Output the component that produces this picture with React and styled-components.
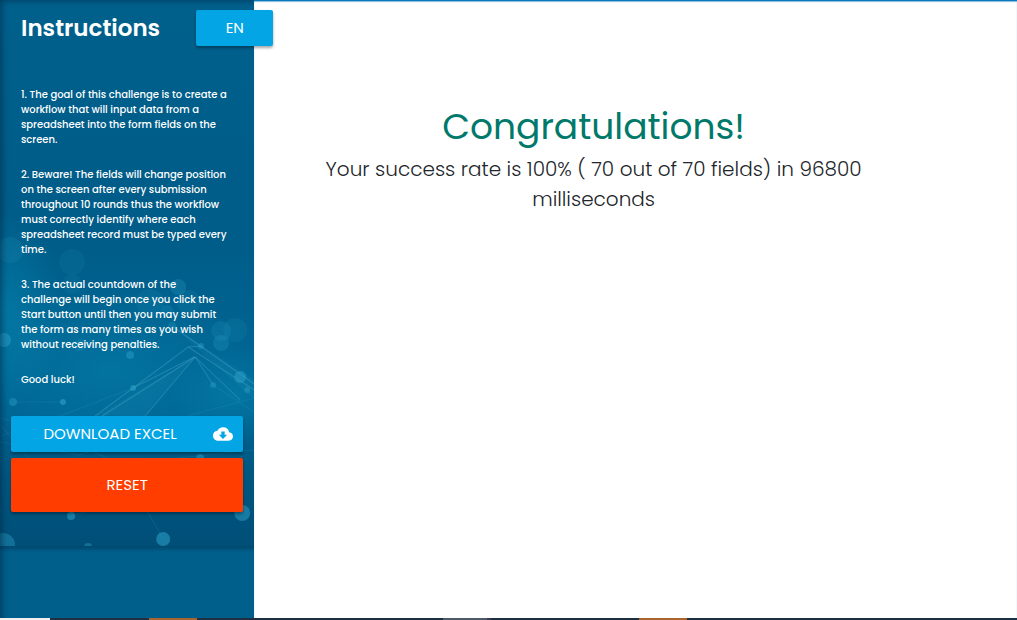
import React from "react";
import styled, { createGlobalStyle } from "styled-components";
import { MdCloudDownload } from "react-icons/md";

const GlobalStyle = createGlobalStyle`
  *, *::before, *::after { box-sizing: border-box; }
  body {
    margin: 0;
    background: #ffffff;
    color: #212529;
    font-family: Poppins, Inter, "Open Sans", sans-serif;
  }
`;

const Page = styled.div`
  display: flex;
  flex-direction: column;
  min-height: 100vh;
`;

const Columns = styled.div`
  display: flex;
  flex: 1;
`;

const Sidebar = styled.aside`
  position: relative;
  z-index: 1;
  display: flex;
  flex-direction: column;
  flex: 0 0 25%;
  min-width: 0;
  padding: 10px 11px 34px;
  background: #005f8b;
  color: #ffffff;

  &::after {
    content: "";
    position: absolute;
    inset: 0;
    z-index: -1;
    box-shadow: inset 5px 4px 6px -3px rgba(0, 40, 70, 0.6);
    pointer-events: none;
  }
`;

const Backdrop = styled.svg`
  position: absolute;
  top: 0;
  left: 0;
  z-index: -1;
  width: 100%;
  height: 556px;
`;

const Header = styled.header`
  display: flex;
  align-items: center;
  justify-content: space-between;
  height: 36px;
  margin-right: -30px;
  padding-left: 10px;
`;

const Title = styled.h1`
  margin: 0;
  font-size: 23px;
  font-weight: 600;
  line-height: 36px;
`;

const Button = styled.button`
  display: flex;
  align-items: center;
  justify-content: center;
  gap: 4px;
  width: ${(p) => p.$width || "100%"};
  height: ${(p) => (p.$tall ? "54px" : "36px")};
  padding: ${(p) => (p.$withIcon ? "0 10px 1px 0" : "0 10px 1px")};
  border: 0;
  border-radius: 2px;
  background: ${(p) => (p.$danger ? "#ff3d00" : "#03a5e4")};
  box-shadow: 0 2px 3px rgba(0, 0, 0, 0.35);
  color: #ffffff;
  font-family: inherit;
  font-size: 15px;
  font-weight: 400;
  line-height: 22px;
  text-transform: uppercase;
  cursor: pointer;
`;

const ButtonLabel = styled.span`
  flex: 1;
  text-align: center;
`;

const Rules = styled.div`
  display: flex;
  flex-direction: column;
  gap: 20px;
  margin: 41px 0 29px;
  padding-left: 10px;
  font-size: 10px;
  font-weight: 500;
  line-height: 15px;
  white-space: nowrap;
`;

const Rule = styled.p`
  margin: 0;
`;

const Actions = styled.div`
  display: flex;
  flex-direction: column;
  gap: 6px;
`;

const Main = styled.main`
  flex: 1;
  padding: 101px 84px 40px 0;
  border-top: 1px solid #0a78bd;
  box-shadow: inset 0 1px 1px rgba(10, 120, 189, 0.5);
  text-align: center;
`;

const Congrats = styled.h2`
  margin: 0 0 2px;
  color: #00796b;
  font-size: 36px;
  font-weight: 400;
  line-height: 50px;
`;

const Score = styled.p`
  margin: 0;
  font-size: 20px;
  font-weight: 300;
  line-height: 30px;
`;

const Taskbar = styled.footer`
  display: flex;
  height: 2px;
  background: #1d3042;
`;

const Task = styled.span`
  width: ${(p) => p.$width}px;
  margin-left: ${(p) => p.$gap || 0}px;
  background: ${(p) => p.$color};
`;

const dots = [
  [4, 340, 7, 0.5], [80, 345, 6, 0.2], [130, 355, 4, 0.45],
  [133, 388, 3, 0.6], [13, 402, 4, 0.4], [63, 402, 3, 0.6],
  [201, 346, 3, 0.4], [240, 377, 6, 0.5], [213, 385, 3, 0.4],
  [247, 390, 3, 0.4], [178, 287, 8, 0.25], [188, 302, 12, 0.12],
  [221, 331, 10, 0.18], [221, 343, 8, 0.25], [235, 330, 12, 0.12],
  [167, 311, 6, 0.2], [172, 326, 4, 0.25], [150, 303, 14, 0.12],
  [72, 262, 13, 0.1], [72, 284, 10, 0.1], [10, 250, 13, 0.15],
  [71, 516, 4, 0.55], [163, 539, 7, 0.55], [242, 513, 8, 0.5],
  [3, 545, 12, 0.4], [88, 547, 4, 0.4], [200, 458, 4, 0.5],
];

const brightLines = [
  "M188 347L254 390", "M172 326L254 384", "M194 357L133 388L95 416",
  "M195 357L102 416", "M195 357L145 416", "M195 357L213 385",
  "M195 357L240 400", "M201 346L188 347L133 388",
];

const faintLines = [
  "M133 388L60 416L0 436", "M0 418L50 432L120 464L254 450",
  "M0 442L80 455L180 418L254 398", "M120 464L163 539",
  "M120 464L242 513", "M120 464L71 516", "M71 516L130 500", "M0 424L28 458",
  "M13 402L63 402", "M213 385L254 412",
];

function NetworkBackdrop() {
  return (
    <Backdrop viewBox="0 0 254 556" preserveAspectRatio="none" aria-hidden="true">
      <defs>
        <linearGradient id="sea" x1="0" y1="0" x2="0" y2="1">
          <stop offset="0" stopColor="#00608c" />
          <stop offset="0.42" stopColor="#005c88" />
          <stop offset="0.62" stopColor="#006391" />
          <stop offset="0.76" stopColor="#006492" />
          <stop offset="0.88" stopColor="#00567f" />
          <stop offset="1" stopColor="#004f79" />
        </linearGradient>
        <radialGradient id="glow">
          <stop offset="0" stopColor="#0898c0" stopOpacity="0.4" />
          <stop offset="1" stopColor="#0898c0" stopOpacity="0" />
        </radialGradient>
        <linearGradient id="edge" x1="0" y1="0" x2="0" y2="1">
          <stop offset="0" stopColor="#003454" stopOpacity="0.55" />
          <stop offset="1" stopColor="#003454" stopOpacity="0" />
        </linearGradient>
      </defs>
      <rect width="254" height="546" fill="url(#sea)" />
      <ellipse cx="0" cy="310" rx="65" ry="100" fill="url(#glow)" />
      <ellipse cx="110" cy="370" rx="150" ry="90" fill="url(#glow)" opacity="0.75" />
      <ellipse cx="235" cy="395" rx="65" ry="50" fill="url(#glow)" opacity="0.8" />
      <g fill="none" stroke="#62bcd9">
        <g strokeOpacity="0.3">
          {brightLines.map((d) => <path key={d} d={d} />)}
        </g>
        <g strokeOpacity="0.12">
          {faintLines.map((d) => <path key={d} d={d} />)}
        </g>
      </g>
      <path d="M195 357L95 416H145ZM172 326L254 380V400Z" fill="#4eb4d4" opacity="0.08" />
      <g fill="#2ca2c8">
        {dots.map(([x, y, r, o]) => (
          <circle key={`${x}-${y}`} cx={x} cy={y} r={r} opacity={o} />
        ))}
      </g>
      <rect y="546" width="254" height="10" fill="#005f8b" />
      <rect y="546" width="254" height="6" fill="url(#edge)" />
    </Backdrop>
  );
}

export default function App() {
  return (
    <Page>
      <GlobalStyle />
      <Columns>
        <Sidebar>
          <NetworkBackdrop />
          <Header>
            <Title>Instructions</Title>
            <Button type="button" $width="77px">EN</Button>
          </Header>
          <Rules>
            <Rule>
              1. The goal of this challenge is to create a<br />
              workflow that will input data from a<br />
              spreadsheet into the form fields on the<br />
              screen.
            </Rule>
            <Rule>
              2. Beware! The fields will change position<br />
              on the screen after every submission<br />
              throughout 10 rounds thus the workflow<br />
              must correctly identify where each<br />
              spreadsheet record must be typed every<br />
              time.
            </Rule>
            <Rule>
              3. The actual countdown of the<br />
              challenge will begin once you click the<br />
              Start button until then you may submit<br />
              the form as many times as you wish<br />
              without receiving penalties.
            </Rule>
            <Rule>Good luck!</Rule>
          </Rules>
          <Actions>
            <Button type="button" $withIcon>
              <ButtonLabel>Download Excel</ButtonLabel>
              <MdCloudDownload size={20} aria-hidden="true" />
            </Button>
            <Button type="button" $danger $tall>Reset</Button>
          </Actions>
        </Sidebar>
        <Main>
          <Congrats>Congratulations!</Congrats>
          <Score>
            Your success rate is 100% ( 70 out of 70 fields) in 96800
            <br />
            milliseconds
          </Score>
        </Main>
      </Columns>
      <Taskbar>
        <Task $width={50} $color="#f3f1f0" />
        <Task $width={48} $gap={99} $color="#a9652f" />
        <Task $width={44} $gap={246} $color="#4c5a68" />
        <Task $width={4} $color="#343e4c" />
        <Task $width={48} $gap={148} $color="#a9652f" />
      </Taskbar>
    </Page>
  );
}
